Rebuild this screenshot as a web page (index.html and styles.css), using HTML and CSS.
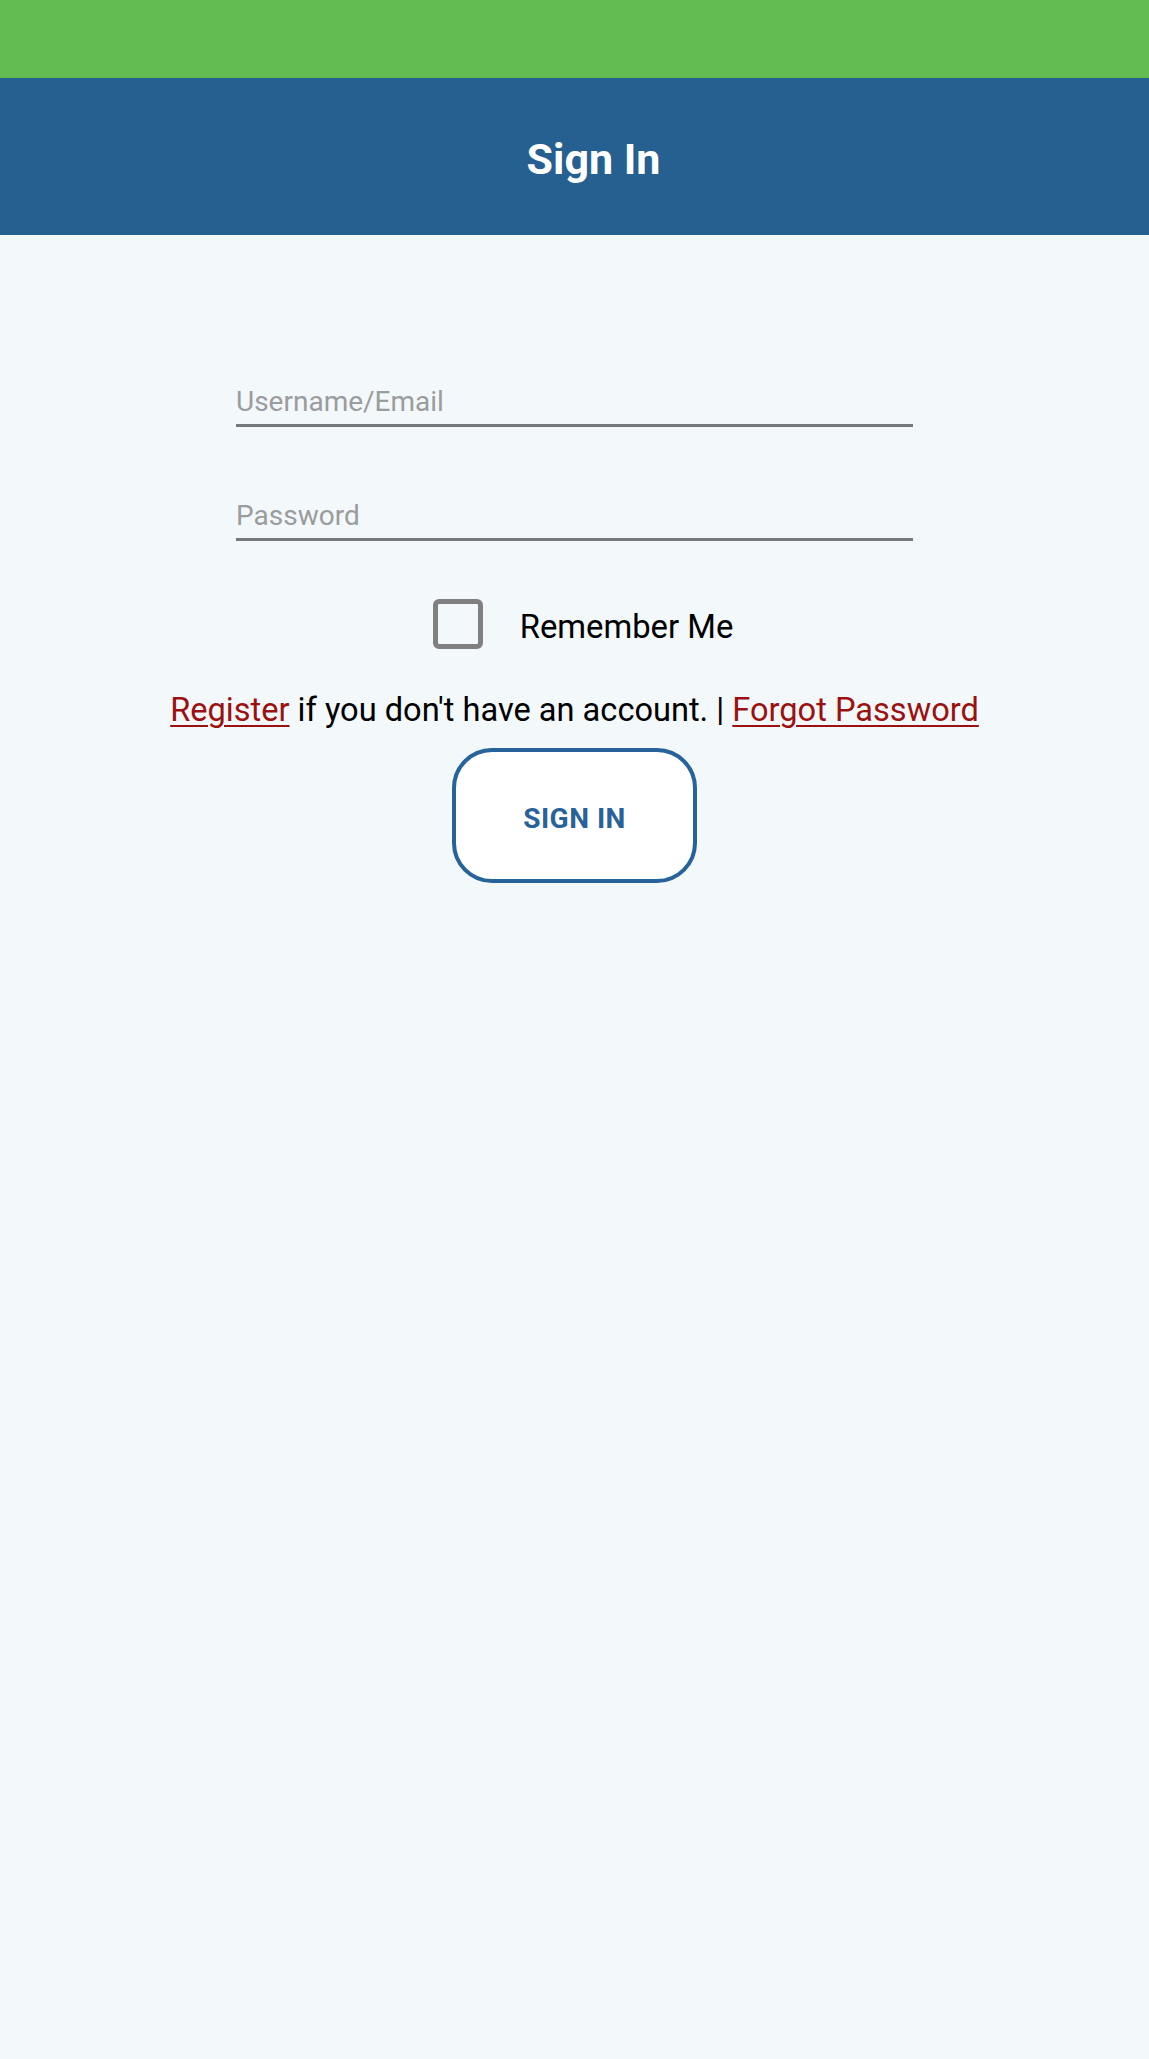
FILE: index.html
```html
<!DOCTYPE html>
<html lang="en">
<head>
<meta charset="utf-8">
<title>Sign In</title>
<link rel="stylesheet" href="styles.css">
</head>
<body>
  <div class="status-bar"></div>
  <header class="app-header">
    <h1 class="app-title">Sign In</h1>
  </header>
  <main class="signin">
    <input class="field field-user" type="text" placeholder="Username/Email">
    <input class="field field-pass" type="password" placeholder="Password">
    <label class="remember">
      <span class="checkbox"></span>
      <span class="remember-text">Remember Me</span>
    </label>
    <p class="links"><a href="#">Register</a> if you don't have an account. | <a href="#">Forgot Password</a></p>
    <button class="signin-btn" type="button">SIGN IN</button>
  </main>
</body>
</html>
```
FILE: styles.css
```css
* { box-sizing: border-box; }
html, body {
  margin: 0;
  padding: 0;
  background: #f3f8fb;
  font-family: Roboto, "Liberation Sans", Arial, sans-serif;
}
body { min-height: 2059px; }

.status-bar {
  height: 78px;
  background: #63bc52;
}

.app-header {
  height: 157px;
  background: #256091;
  display: flex;
  align-items: center;
  justify-content: center;
  padding-top: 5px;
  padding-left: 38px;
}
.app-title {
  margin: 0;
  color: #ffffff;
  font-size: 43px;
  font-weight: 700;
}

.signin {
  display: flex;
  flex-direction: column;
  align-items: center;
}

.field {
  display: block;
  width: 677px;
  height: 46px;
  padding: 0 0 2px;
  margin: 0;
  border: none;
  border-bottom: 3px solid #76797b;
  background: transparent;
  font-family: Roboto, "Liberation Sans", Arial, sans-serif;
  font-size: 28px;
  color: #222;
  outline: none;
}
.field::placeholder { color: #9a9c9e; opacity: 1; }
.field-user { margin-top: 146px; }
.field-pass { margin-top: 68px; }

.remember {
  display: flex;
  align-items: center;
  gap: 37px;
  margin-top: 58px;
  padding-left: 17px;
}
.checkbox {
  width: 50px;
  height: 50px;
  border: 5px solid #808080;
  border-radius: 6px;
  background: transparent;
}
.remember-text {
  font-size: 32.8px;
  color: #000;
  padding-top: 5px;
}

.links {
  margin: 42px 0 0;
  font-size: 32.6px;
  color: #000;
  text-align: center;
}
.links a {
  color: #9b1111;
  text-decoration: underline;
  text-decoration-thickness: 2px;
  text-underline-offset: 4px;
}

.signin-btn {
  margin-top: 19px;
  width: 245px;
  height: 135px;
  border: 4px solid #28629a;
  border-radius: 40px;
  background: #ffffff;
  color: #28629a;
  font-family: Roboto, "Liberation Sans", Arial, sans-serif;
  font-size: 28px;
  font-weight: 700;
  letter-spacing: 0.5px;
  padding: 5px 0 0;
}
```
